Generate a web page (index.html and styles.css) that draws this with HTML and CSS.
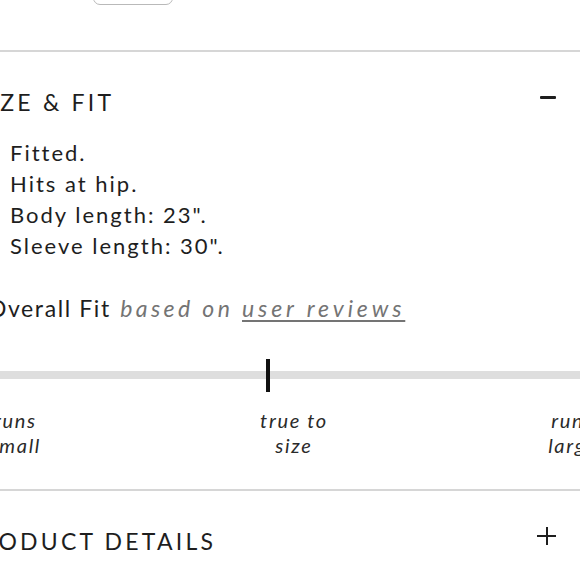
FILE: index.html
```html
<!DOCTYPE html>
<html>
<head>
<meta charset="utf-8">
<link rel="stylesheet" href="styles.css">
</head>
<body>
<div class="page">
  <div class="prev">
    <div class="prev-btn"></div>
  </div>
  <section class="acc">
    <div class="acc-head">
      <h2 class="acc-title title-size">SIZE &amp; FIT</h2>
      <span class="icon-minus"></span>
    </div>
    <div class="acc-body">
      <ul class="fit-list">
        <li>Fitted.</li>
        <li>Hits at hip.</li>
        <li>Body length: 23".</li>
        <li>Sleeve length: 30".</li>
      </ul>
      <p class="overall">Overall Fit <em class="based">based on <a class="reviews">user reviews</a></em></p>
      <div class="scale">
        <div class="track"><span class="marker"></span></div>
        <div class="labels">
          <span class="lab">runs<br>small</span>
          <span class="lab">true to<br>size</span>
          <span class="lab">runs<br>large</span>
        </div>
      </div>
    </div>
  </section>
  <section class="acc acc-closed">
    <div class="acc-head">
      <h2 class="acc-title title-details">PRODUCT DETAILS</h2>
      <span class="icon-plus"></span>
    </div>
  </section>
</div>
</body>
</html>
```
FILE: styles.css
```css
html, body {
  margin: 0;
  padding: 0;
  background: #fff;
  overflow: hidden;
}
body {
  font-family: "Lato", "Noto Sans", sans-serif;
  color: #1e1e1e;
  width: 580px;
  height: 580px;
}
.page {
  margin-left: -36px;
  width: 680px;
}
.prev {
  height: 50px;
  display: flex;
}
.prev-btn {
  margin-left: 129px;
  margin-top: -26px;
  width: 78px;
  height: 29px;
  border: 1.5px solid #b9b9b9;
  border-radius: 7px;
}
.acc {
  border-top: 2px solid #d6d6d6;
}
.acc-head {
  display: flex;
  align-items: center;
  justify-content: space-between;
  height: 100px;
  width: 592px;
}
.acc-title {
  margin: 0;
  font-size: 23px;
  font-weight: 400;
  letter-spacing: 3.2px;
}
.title-size { margin-left: 11px; }
.icon-minus {
  width: 16px;
  height: 3px;
  margin-bottom: 10px;
  background: #1e1e1e;
  border-radius: 1px;
}
.icon-plus {
  position: relative;
  width: 19px;
  height: 18px;
  margin-bottom: 10px;
}
.icon-plus::before,
.icon-plus::after {
  content: "";
  position: absolute;
  background: #1e1e1e;
}
.icon-plus::before { left: 0; right: 0; top: 8px; height: 2px; }
.icon-plus::after { top: 0; bottom: 0; left: 8.5px; width: 2px; }
.acc-body {
  margin-top: -15px;
}
.fit-list {
  list-style: none;
  margin: 0;
  padding: 0 0 0 46px;
  font-size: 22px;
  line-height: 31px;
  letter-spacing: 2px;
}
.overall {
  margin: 33px 0 0 24px;
  font-size: 23px;
  letter-spacing: 1.6px;
}
.based {
  color: #747474;
  letter-spacing: 3.4px;
  margin-left: 2px;
}
.reviews {
  letter-spacing: 3.9px;
  text-decoration: underline;
  text-underline-offset: 3px;
  text-decoration-thickness: 2px;
}
.scale {
  margin-top: 49px;
}
.track {
  position: relative;
  height: 8px;
  background: #dedede;
}
.marker {
  position: absolute;
  left: 302px;
  top: -12px;
  width: 4px;
  height: 33px;
  background: #111;
}
.labels {
  display: grid;
  grid-template-columns: repeat(3, 1fr);
  margin-left: -88px;
  width: 836px;
  margin-top: 29px;
  font-size: 20px;
  font-style: italic;
  line-height: 25px;
  letter-spacing: 1.7px;
  text-align: center;
  color: #2a2a2a;
}
.acc-closed {
  margin-top: 31px;
}
```
